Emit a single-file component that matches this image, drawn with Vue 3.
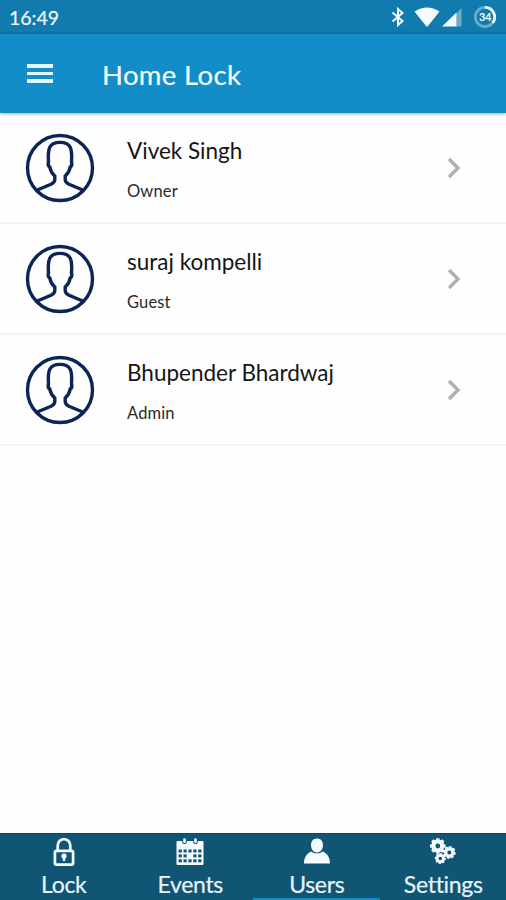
<template>
  <div class="screen">
    <div class="status-bar">
      <span class="clock">16:49</span>
      <div class="status-icons">
        <svg class="bluetooth" width="14" height="20" viewBox="0 0 14 20">
          <path d="M1.5 5.5 L11.5 14 L7 18 V2 L11.5 6 L1.5 14.5" />
        </svg>
        <svg class="wifi" width="26" height="20" viewBox="0 0 26 20">
          <path d="M0.5 4.5 Q13 -3.5 25.5 4.5 L14 19 Q13 20 12 19 Z" />
        </svg>
        <svg class="signal" width="21" height="20" viewBox="0 0 21 20">
          <path class="faint" d="M14.5 6.5 L19.5 1 V19.5 H14.5 Z" />
          <path d="M0 19.5 L14.5 5.5 V19.5 Z" />
        </svg>
        <svg class="battery" width="24" height="24" viewBox="0 0 24 24">
          <circle class="track" cx="12" cy="12" r="9.6" />
          <path class="level" d="M12 2.4 A9.6 9.6 0 0 1 19.6 17.9" />
          <text x="12" y="16" text-anchor="middle">34</text>
        </svg>
      </div>
    </div>

    <header class="toolbar">
      <div class="hamburger">
        <span></span>
        <span></span>
        <span></span>
      </div>
      <h1>Home Lock</h1>
    </header>

    <main class="user-list">
      <div class="user" v-for="user in users" :key="user.name">
        <svg class="avatar" width="70" height="70" viewBox="0 0 70 70">
          <circle cx="35" cy="35" r="32.5" />
          <path d="M12.3 57 L26 51.3 Q29.8 49.5 29.8 46.5 V43 C27 40.5 25.3 37.5 24.8 34 C23.2 33.3 22.9 31 23.5 28.8 C22.6 16 24 9.4 35 9.4 C46 9.4 47.4 16 46.5 28.8 C47.1 31 46.8 33.3 45.2 34 C44.7 37.5 43 40.5 40.2 43 V46.5 Q40.2 49.5 44 51.3 L57.7 57" />
        </svg>
        <div class="info">
          <div class="name">{{ user.name }}</div>
          <div class="role">{{ user.role }}</div>
        </div>
        <svg class="chevron" width="14" height="22" viewBox="0 0 14 22">
          <path d="M2 2 L11 11 L2 20" />
        </svg>
      </div>
    </main>

    <nav class="tabs">
      <div class="tab" v-for="tab in tabs" :key="tab" :class="{ active: tab === activeTab }">
        <svg v-if="tab === 'Lock'" width="28" height="28" viewBox="0 0 28 28">
          <path class="shackle" d="M7.7 13 V7.5 A6.3 6.3 0 0 1 20.3 7.5 V13" />
          <rect class="lock-body" x="4.9" y="12.9" width="18.2" height="13.7" rx="1.5" />
          <circle cx="14" cy="18" r="2.6" />
          <path d="M12.8 18 H15.2 V23 H12.8 Z" />
        </svg>
        <svg v-else-if="tab === 'Events'" width="28" height="28" viewBox="0 0 28 28">
          <rect x="0.5" y="3" width="27" height="24" rx="1" />
          <g class="holes">
            <rect x="6.2" y="0" width="4.6" height="6" rx="2" />
            <rect x="17.2" y="0" width="4.6" height="6" rx="2" />
            <rect v-for="hole in calendarHoles" :key="hole.id" :x="hole.x" :y="hole.y" width="3.2" height="3" />
          </g>
          <rect x="7.2" y="0.3" width="2.6" height="4.7" rx="1.2" />
          <rect x="18.2" y="0.3" width="2.6" height="4.7" rx="1.2" />
        </svg>
        <svg v-else-if="tab === 'Users'" width="28" height="28" viewBox="0 0 28 28">
          <path d="M14 0.5 C18.3 0.5 20.3 4 19.9 8 C19.6 12 17 14.4 14 14.4 C11 14.4 8.4 12 8.1 8 C7.7 4 9.7 0.5 14 0.5 Z" />
          <path d="M1 25.6 C1 19.6 3.4 15.6 8.2 13.4 C11.5 16 16.5 16 19.8 13.4 C24.6 15.6 27 19.6 27 25.6 Z" />
        </svg>
        <svg v-else width="28" height="28" viewBox="0 0 28 28">
          <path v-for="gear in gears" :key="gear.id" fill-rule="evenodd" :d="gear.d" />
        </svg>
        <span class="label">{{ tab }}</span>
      </div>
    </nav>
  </div>
</template>

<script setup>
import { ref } from 'vue';

const users = [
  { name: 'Vivek Singh', role: 'Owner' },
  { name: 'suraj kompelli', role: 'Guest' },
  { name: 'Bhupender Bhardwaj', role: 'Admin' }
];

const tabs = ['Lock', 'Events', 'Users', 'Settings'];
const activeTab = ref('Users');

const calendarHoles = [];
for (let row = 0; row < 3; row++) {
  for (let col = 0; col < 5; col++) {
    // the marked day stays filled
    if (row === 1 && col === 2) continue;
    calendarHoles.push({ id: `${row}-${col}`, x: 2.6 + col * 4.9, y: 11.5 + row * 4.9 });
  }
}

// cog outline with a round hole in the middle
const gearPath = (cx, cy, outer, inner, hole, start = 0) => {
  const teeth = 8;
  const points = [];
  for (let i = 0; i < teeth; i++) {
    const mid = start + (i * 2 * Math.PI) / teeth;
    const corners = [[-0.28, inner], [-0.2, outer], [0.2, outer], [0.28, inner]];
    corners.forEach(([offset, r]) => {
      const a = mid + offset;
      points.push(`${(cx + r * Math.cos(a)).toFixed(2)} ${(cy + r * Math.sin(a)).toFixed(2)}`);
    });
  }
  return `M${points.join('L')}Z M${cx - hole} ${cy}a${hole} ${hole} 0 1 0 ${hole * 2} 0a${hole} ${hole} 0 1 0 ${-hole * 2} 0Z`;
};

const gears = [
  { id: 'large', d: gearPath(8.8, 8, 8, 6.5, 2.4) },
  { id: 'medium', d: gearPath(20.3, 14.4, 6.5, 5.3, 2, 0.2) },
  { id: 'small', d: gearPath(11.3, 20.5, 5.6, 4.6, 1.8, 0.1) }
];
</script>

<style>
body {
  background: #fff;
}
</style>

<style scoped>
.screen {
  height: 900px;
  display: flex;
  flex-direction: column;
  overflow: hidden;
  background: #fefefe;
  font-family: Lato, "Liberation Sans", sans-serif;
}

.status-bar {
  height: 34px;
  box-sizing: border-box;
  padding: 0 9px;
  display: flex;
  align-items: center;
  justify-content: space-between;
  background: linear-gradient(#117bad 0, #117bad 31px, #0f6d9c 34px);
  color: #eef8ff;
}

.clock {
  font-size: 19.5px;
  line-height: 34px;
  padding-top: 2px;
  -webkit-text-stroke: 0.2px #eef8ff;
}

.status-icons {
  display: flex;
  align-items: center;
}

.status-icons svg {
  fill: #f4fbff;
}

.status-icons .bluetooth {
  fill: none;
  stroke: #f4fbff;
  stroke-width: 2;
  margin-right: 9px;
}

.wifi {
  margin-right: 2px;
}

.signal {
  margin-right: 10px;
}

.signal .faint {
  opacity: 0.4;
}

.battery circle,
.battery path {
  fill: none;
  stroke: #eaf7fd;
  stroke-width: 2.8;
}

.battery .track {
  opacity: 0.4;
}

.battery text {
  font-size: 11px;
  font-weight: 700;
  letter-spacing: -0.5px;
}

.toolbar {
  height: 79px;
  flex: none;
  display: flex;
  align-items: center;
  padding: 0 27px;
  background: #128dc8;
  box-shadow: 0 1px 3px rgba(0, 0, 0, 0.35);
  z-index: 1;
}

.hamburger {
  width: 26px;
  display: flex;
  flex-direction: column;
  gap: 4px;
}

.hamburger span {
  height: 3.6px;
  background: #e6f5fd;
}

.toolbar h1 {
  margin: 3px 0 0 49px;
  color: #f2faff;
  font-size: 27.5px;
  font-weight: 400;
  letter-spacing: 0.35px;
  line-height: 34px;
  -webkit-text-stroke: 0.2px #f2faff;
}

.user-list {
  flex: 1;
}

.user {
  height: 111px;
  box-sizing: border-box;
  padding: 0 45px 0 25px;
  display: flex;
  align-items: center;
  border-bottom: 2px solid #f3f3f3;
}

.avatar {
  fill: none;
  stroke: #0c2556;
  stroke-width: 3.4;
}

.info {
  flex: 1;
  margin: 2px 0 0 32px;
}

.name {
  color: #151515;
  font-size: 22.5px;
  line-height: 28px;
}

.role {
  margin-top: 16px;
  color: #2a2a2a;
  font-size: 16.5px;
  letter-spacing: 0.15px;
  line-height: 20px;
}

.chevron {
  fill: none;
  stroke: #b0b0b0;
  stroke-width: 3.4;
}

.tabs {
  height: 67px;
  box-sizing: border-box;
  border-top: 1px solid #0d4566;
  display: grid;
  grid-template-columns: repeat(4, 1fr);
  background: #105674;
}

.tab {
  display: flex;
  flex-direction: column;
  align-items: center;
  padding: 4px 0 0 1px;
  border-bottom: 3px solid transparent;
}

.tab.active {
  border-bottom-color: #128dc8;
}

.tab svg {
  flex: none;
  fill: #f5faff;
}

.tab .shackle,
.tab .lock-body {
  fill: none;
  stroke: #f5faff;
  stroke-width: 2.7;
}

.tab .holes {
  fill: #105674;
}

.label {
  margin-top: 4px;
  color: #eaf3fa;
  font-size: 23px;
  letter-spacing: -0.3px;
  line-height: 28px;
  -webkit-text-stroke: 0.2px #eaf3fa;
}
</style>
